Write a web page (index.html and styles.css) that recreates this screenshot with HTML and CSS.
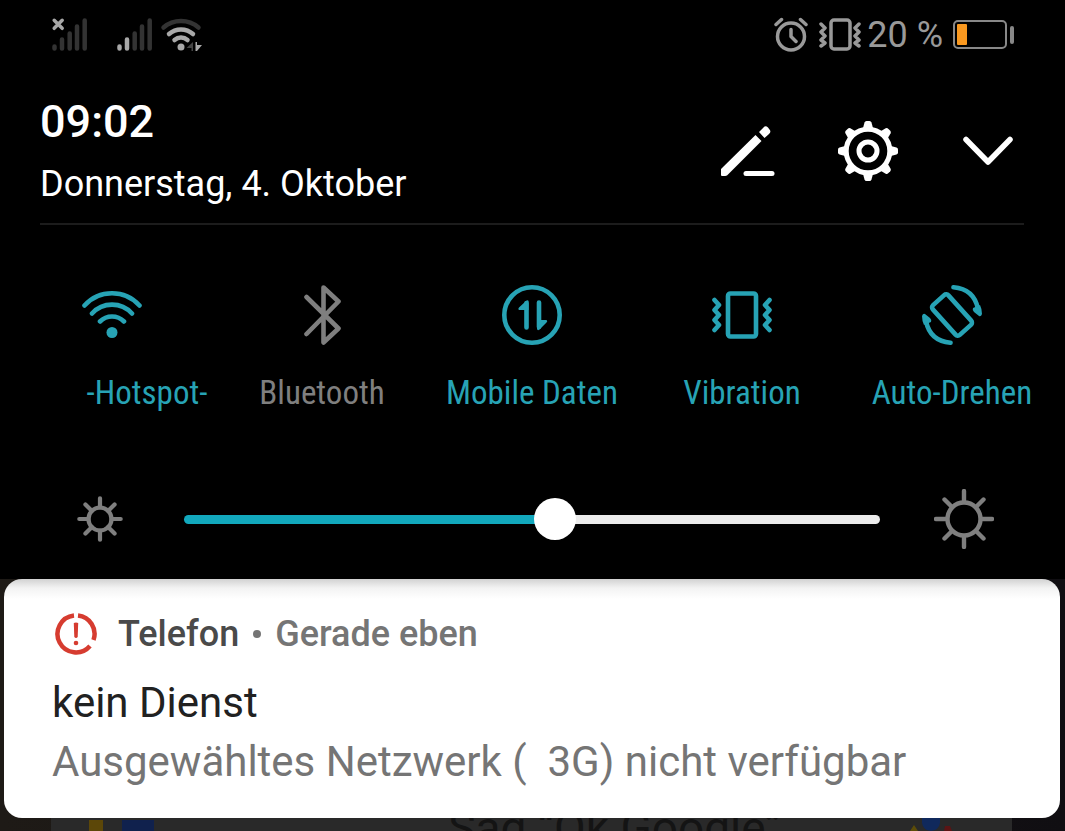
FILE: index.html
```html
<!DOCTYPE html>
<html lang="de">
<head>
<meta charset="utf-8">
<meta name="viewport" content="width=device-width, initial-scale=1">
<title>Benachrichtigungen</title>
<link rel="stylesheet" href="styles.css">
</head>
<body>
<div class="screen">
  <section class="shade">
    <div class="status">
      <div class="status-left">
        <svg class="signal" viewBox="0 0 36 36" aria-hidden="true">
          <path class="bars-dim" d="M3.5 29.5v2M11 22.500v9M18.700 16.500v15M26 9.500v22M33.700 3.500v28"/>
          <path class="bars-lit cross" d="M3.200 3.300l8 8M11.200 3.300l-8 8"/>
        </svg>
        <svg class="signal" viewBox="0 0 36 36" aria-hidden="true">
          <path class="bars-dim" d="M18.700 16.500v15M26 9.500v22M33.700 3.500v28"/>
          <path class="bars-lit" d="M3.500 29.500v2M11 22.500v9"/>
        </svg>
        <svg class="status-wifi" viewBox="0 0 42 36" aria-hidden="true">
          <path class="bars-dim" d="M3.500 10.500A27 27 0 0 1 38.500 10.500"/>
          <path class="bars-lit" d="M9 17A18 18 0 0 1 33 17M14.500 23A10 10 0 0 1 27.500 23"/>
          <circle class="dot" cx="21" cy="30" r="3.500"/>
          <path class="arrow-dim" d="M33 25v9h-1.500v-3h-5z"/>
          <path class="dot" d="M35.500 25h1.500v3h5l-5 6h-1.500z"/>
        </svg>
      </div>
      <div class="status-right">
        <svg class="alarm" viewBox="0 0 34 36" aria-hidden="true">
          <circle cx="17" cy="19.500" r="13.500"/>
          <path d="M17 12.500v7l5 5M2 7.500l5.500-5M32 7.500l-5.500-5"/>
        </svg>
        <svg class="vibrate-small" viewBox="0 0 42 36" aria-hidden="true">
          <rect x="12" y="3" width="19" height="29" rx="3"/>
          <path d="M2 7l4 4-4 4 4 4-4 4 4 3-4 3M40 7l-4 4 4 4-4 4 4 4-4 3 4 3"/>
        </svg>
        <span class="percent">20 %</span>
        <svg class="battery" viewBox="0 0 62 30" aria-hidden="true">
          <rect class="case" x="1" y="1" width="52" height="27" rx="4"/>
          <rect class="charge" x="4" y="4" width="10" height="21" rx="1"/>
          <rect class="tip" x="57" y="6" width="4" height="18" rx="2"/>
        </svg>
      </div>
    </div>

    <header class="head">
      <div class="now">
        <time class="clock">09:02</time>
        <div class="date">Donnerstag, 4. Oktober</div>
      </div>
      <div class="actions">
        <button type="button" aria-label="Bearbeiten">
          <svg viewBox="0 0 60 60" aria-hidden="true">
            <path class="solid" d="M3 48L37.500 14L43.500 20L9 54.500Q8 55 4 55Q3 55 3 54zM41 11L45.500 6.500Q47.500 4 50 6.500L51.500 8.500Q53.500 11 51 13L46.500 17z"/>
            <path class="line" d="M28 52.500h26"/>
          </svg>
        </button>
        <button type="button" aria-label="Einstellungen">
          <svg viewBox="0 0 60 60" aria-hidden="true">
            <g class="solid">
              <path id="tooth" d="M24.500 9L26.500 1.500Q27 0 28.500 0H31.500Q33 0 33.500 1.500L35.500 9z"/>
              <use href="#tooth" transform="rotate(45 30 30)"/>
              <use href="#tooth" transform="rotate(90 30 30)"/>
              <use href="#tooth" transform="rotate(135 30 30)"/>
              <use href="#tooth" transform="rotate(180 30 30)"/>
              <use href="#tooth" transform="rotate(225 30 30)"/>
              <use href="#tooth" transform="rotate(270 30 30)"/>
              <use href="#tooth" transform="rotate(315 30 30)"/>
            </g>
            <circle class="line" cx="30" cy="30" r="21.800"/>
            <circle class="line" cx="30" cy="30" r="9"/>
          </svg>
        </button>
        <button type="button" aria-label="Einklappen">
          <svg viewBox="0 0 60 60" aria-hidden="true">
            <path class="line chevron" d="M8 18.500L30 41L52 18.500"/>
          </svg>
        </button>
      </div>
    </header>

    <div class="tiles">
      <button type="button" class="tile on" aria-pressed="true">
        <svg viewBox="0 0 60 60" aria-hidden="true">
          <path d="M2.500 20.500A37 37 0 0 1 57.500 20.500M10 28.500A27 27 0 0 1 50 28.500M18 36.500A17 17 0 0 1 42 36.500"/>
          <circle class="fill" cx="30" cy="47.500" r="5.500"/>
        </svg>
        <span class="label shifted">-Hotspot-</span>
      </button>
      <button type="button" class="tile" aria-pressed="false">
        <svg viewBox="0 0 60 60" aria-hidden="true">
          <path d="M14.500 12L46.500 43.500L31.500 57.500V2.500L46.500 16.500L14.500 49"/>
        </svg>
        <span class="label">Bluetooth</span>
      </button>
      <button type="button" class="tile on" aria-pressed="true">
        <svg viewBox="0 0 60 60" aria-hidden="true">
          <circle cx="30" cy="30" r="27.700"/>
          <path d="M24.500 42.500V18M37 17.500V42"/>
          <path class="fill" d="M26.500 16V25H17Q15.500 24 17 22.500L24 16Q26 14.500 26.500 16zM35 44V35H44.500Q46 36 44.500 37.500L37.500 44.500Q35.500 46 35 44z"/>
        </svg>
        <span class="label">Mobile Daten</span>
      </button>
      <button type="button" class="tile on" aria-pressed="true">
        <svg viewBox="0 0 60 60" aria-hidden="true">
          <rect x="16" y="8.500" width="28" height="43" rx="2.500"/>
          <path d="M2.500 15L7 20L2.500 25L7 30L2.500 35L7 40L2.500 45M57.500 15L53 20L57.500 25L53 30L57.500 35L53 40L57.500 45"/>
        </svg>
        <span class="label">Vibration</span>
      </button>
      <button type="button" class="tile on" aria-pressed="true">
        <svg viewBox="0 0 60 60" aria-hidden="true">
          <rect x="19.500" y="10" width="21" height="40" rx="3" transform="rotate(-42 30 30)"/>
          <path d="M31.500 2.300Q52 4 56 24M28.500 57.700Q8 56 4 36"/>
          <path class="fill" d="M51 23L58 20Q60 24 60 29Q59 32 57 31L52 27Q50 25 51 23zM9 37L2 40Q0 36 0 31Q1 28 3 29L8 33Q10 35 9 37z"/>
        </svg>
        <span class="label">Auto-Drehen</span>
      </button>
    </div>

    <div class="brightness">
      <svg class="sun-small" viewBox="0 0 60 60" aria-hidden="true">
        <circle cx="30" cy="30" r="15"/>
        <path d="M30 15V3M30 45V57M15 30H3M45 30H57M19.500 19.500L11 11M40.500 19.500L49 11M19.500 40.500L11 49M40.500 40.500L49 49"/>
      </svg>
      <input class="slider" type="range" min="0" max="200" value="107" aria-label="Helligkeit">
      <svg class="sun-large" viewBox="0 0 60 60" aria-hidden="true">
        <circle cx="30" cy="30" r="16.500"/>
        <path d="M30 13V2M30 47V58M13 30H2M47 30H58M18 18L10.500 10.500M42 18L49.500 10.500M18 42L10.500 49.500M42 42L49.500 49.500"/>
      </svg>
    </div>
  </section>

  <main class="backdrop">
    <article class="card">
      <div class="card-head">
        <svg class="alert" viewBox="0 0 42 42" aria-hidden="true">
          <path class="ring" d="M23 2.500A18.500 18.500 0 0 1 38.500 27M35 33A18.500 18.500 0 1 1 19 2.500"/>
          <path class="mark" d="M18.800 10Q21 9 23.200 10L22.700 24Q21 26 19.300 24z"/>
          <circle class="mark" cx="21" cy="30" r="2.300"/>
        </svg>
        <span class="app">Telefon</span>
        <span class="bullet"></span>
        <span class="when">Gerade eben</span>
      </div>
      <h1 class="title">kein Dienst</h1>
      <p class="text">Ausgewähltes Netzwerk (&nbsp; 3G) nicht verfügbar</p>
    </article>
    <div class="search">
      <span class="chip yellow"></span>
      <span class="chip blue"></span>
      <span class="hint">Sag “Ok Google”</span>
      <svg class="assistant" viewBox="0 0 44 13" aria-hidden="true">
        <path fill="#5c4c08" d="M0 13L4 7L8 13z"/>
        <path fill="#10295c" d="M12 0H30V5Q29 12 21 13Q13 12 12 5z"/>
        <path fill="#5c1414" d="M35 8H40L42 13H34z"/>
      </svg>
    </div>
  </main>
</div>
</body>
</html>
```

FILE: styles.css
```css
* {
  box-sizing: border-box;
}

body {
  margin: 0;
  background: #000;
  font-family: Roboto, "Noto Sans", sans-serif;
}

button {
  padding: 0;
  border: 0;
  background: none;
  color: inherit;
  font: inherit;
}

svg {
  display: block;
  flex: none;
  fill: none;
  stroke-linecap: round;
  stroke-linejoin: round;
}

.screen {
  display: flex;
  flex-direction: column;
  height: 100vh;
  overflow: hidden;
}

.shade {
  flex: none;
  background: #000;
}

/* Status bar */
.status {
  display: flex;
  align-items: center;
  justify-content: space-between;
  height: 70px;
  padding: 0 50px;
}

.status-left,
.status-right {
  display: flex;
  align-items: center;
}

.signal {
  width: 36px;
  height: 36px;
  margin: 0 29px 0 1px;
}

.signal + .signal {
  margin: 0 8px 0 0;
}

.status-wifi {
  width: 42px;
  height: 36px;
}

.bars-dim {
  stroke: #333;
  stroke-width: 4.5;
}

.bars-lit {
  stroke: #a8a8a8;
  stroke-width: 4.5;
}

.cross {
  stroke-width: 3.5;
}

.dot {
  fill: #a8a8a8;
}

.arrow-dim {
  fill: #444;
}

.alarm,
.vibrate-small {
  height: 36px;
  stroke: #999;
  stroke-width: 3.5;
}

.alarm {
  width: 34px;
  margin-right: 11px;
}

.vibrate-small {
  width: 42px;
  margin-right: 6px;
}

.percent {
  margin-right: 10px;
  color: #999;
  font-size: 36px;
  line-height: 40px;
}

.battery {
  width: 62px;
  height: 30px;
}

.case {
  stroke: #888;
  stroke-width: 2;
}

.charge {
  fill: #f9981f;
}

.tip {
  fill: #888;
}

/* Clock, date and actions */
.head {
  display: flex;
  align-items: center;
  justify-content: space-between;
  height: 155px;
  margin: 0 41px 0 40px;
  padding: 8px 6px 0 0;
  border-bottom: 2px solid #1c1c1c;
  color: #fff;
}

.now {
  padding-top: 6px;
}

.clock {
  display: block;
  font-size: 45px;
  font-weight: 500;
  line-height: 60px;
}

.date {
  font-size: 36px;
  line-height: 64px;
}

.actions {
  display: flex;
  gap: 60px;
}

.actions svg {
  width: 60px;
  height: 60px;
}

.solid {
  fill: #fff;
}

.line {
  stroke: #fff;
  stroke-width: 5;
}

.chevron {
  stroke-width: 5.5;
}

/* Quick settings */
.tiles {
  display: grid;
  grid-template-columns: repeat(5, 1fr);
  padding: 60px 8px 0 7px;
}

.tile {
  display: flex;
  flex-direction: column;
  align-items: center;
  gap: 27px;
  color: #7f7f7f;
}

.tile.on {
  color: #27a3b5;
}

.tile svg {
  width: 60px;
  height: 60px;
  stroke: currentColor;
  stroke-width: 4.6;
}

.tile .fill {
  fill: currentColor;
  stroke: none;
}

.label {
  font-family: "Roboto Condensed", "Liberation Sans Narrow", Roboto, sans-serif;
  font-size: 33px;
  line-height: 42px;
  white-space: nowrap;
}

.shifted {
  padding-left: 70px;
}

/* Brightness */
.brightness {
  display: flex;
  align-items: center;
  height: 165px;
  padding: 45px 71px 0 77px;
}

.sun-small,
.sun-large {
  stroke: #7f7f7f;
}

.sun-small {
  width: 46px;
  height: 46px;
  stroke-width: 5.5;
}

.sun-large {
  width: 60px;
  height: 60px;
  stroke-width: 4.4;
}

.slider {
  flex: 1;
  min-width: 0;
  height: 42px;
  margin: 0 54px 0 61px;
  appearance: none;
  background: none;
}

.slider::-webkit-slider-runnable-track {
  height: 9px;
  border-radius: 5px;
  background: linear-gradient(to right, #12a8bd 53%, #ececec 53%);
}

.slider::-webkit-slider-thumb {
  width: 42px;
  height: 42px;
  margin-top: -17px;
  border-radius: 50%;
  appearance: none;
  background: #fff;
}

/* Notification over the dimmed home screen */
.backdrop {
  flex: 1;
  min-height: 0;
  padding: 0 5px 0 4px;
  background: linear-gradient(to right, #1e1a16, #161413 60%, #100e12);
}

.card {
  padding: 30px 48px 28px;
  border-radius: 18px;
  background: linear-gradient(#d2d2d2, #f3f3f3 9px, #fff 20px);
}

.card-head {
  display: flex;
  align-items: center;
  height: 50px;
  font-size: 36px;
  font-weight: 500;
}

.alert {
  width: 42px;
  height: 42px;
  margin: 0 21px 0 3px;
}

.ring {
  stroke: #d63c30;
  stroke-width: 4.5;
  stroke-linecap: butt;
}

.mark {
  fill: #d63c30;
}

.app {
  color: #4a4a4a;
}

.bullet {
  width: 8px;
  height: 8px;
  margin: 0 14px;
  border-radius: 50%;
  background: #757575;
}

.when {
  color: #757575;
}

.title,
.text {
  margin: 0;
  font-size: 42px;
  font-weight: 400;
}

.title {
  padding-top: 13px;
  color: #212121;
  line-height: 62px;
}

.text {
  color: #757575;
  line-height: 56px;
}

.search {
  display: flex;
  align-items: flex-start;
  height: 60px;
  margin: 0 48px 0 47px;
  padding-right: 58px;
  overflow: hidden;
  background: #292929;
}

.chip {
  height: 40px;
  margin-top: 2px;
}

.yellow {
  width: 14px;
  margin-left: 38px;
  background: #5c4708;
}

.blue {
  width: 32px;
  margin-left: 19px;
  background: #10214d;
}

.hint {
  flex: 1;
  padding-left: 166px;
  color: #141414;
  font-size: 46px;
  line-height: 20px;
  text-align: center;
}

.assistant {
  width: 44px;
  height: 13px;
}
```
